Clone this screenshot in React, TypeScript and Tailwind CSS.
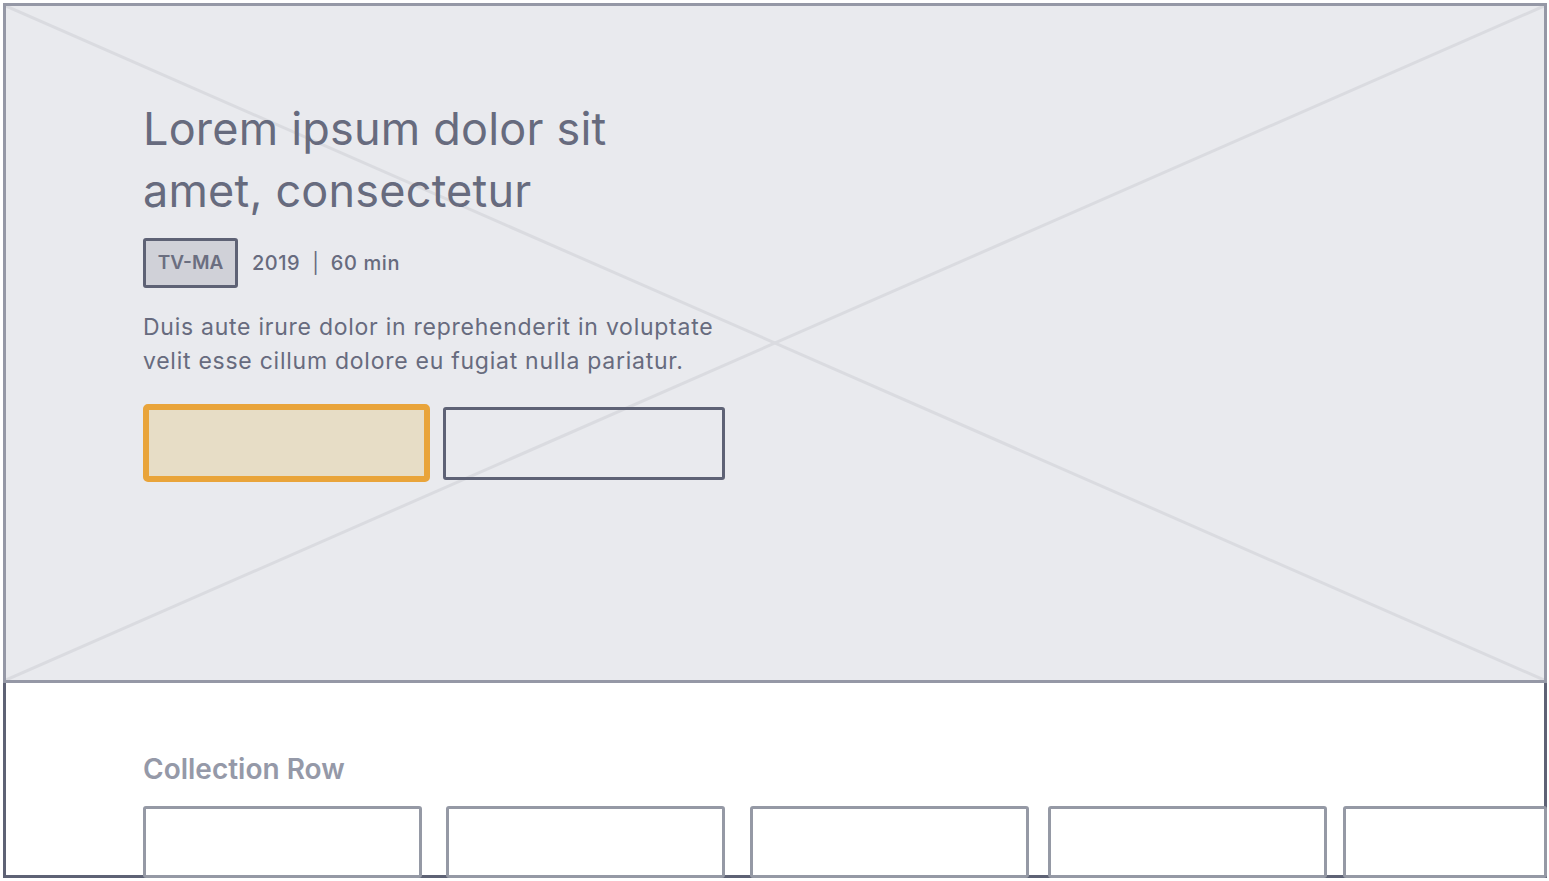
const cards = [
  { w: "w-[279px]", ml: "ml-0" },
  { w: "w-[279px]", ml: "ml-[24px]" },
  { w: "w-[279px]", ml: "ml-[25px]" },
  { w: "w-[279px]", ml: "ml-[19px]" },
  { w: "w-[204px]", ml: "ml-[16px]" },
];

export default function App() {
  return (
    <div className="w-[1549px] h-[881px] bg-white pt-[3px] pl-[3px] font-['Inter',sans-serif] overflow-hidden">
      <div className="w-[1544px] h-[875px] flex flex-col">
        {/* Hero placeholder */}
        <section className="relative h-[680px] shrink-0 border-[3px] border-[#9598a6] bg-[#e9eaee] pl-[137px] pt-[92px]">
          <svg
            className="absolute inset-0 w-full h-full"
            viewBox="0 0 100 100"
            preserveAspectRatio="none"
          >
            <line x1="0" y1="0" x2="100" y2="100" stroke="#dadbe0" strokeWidth="3" vectorEffect="non-scaling-stroke" />
            <line x1="100" y1="0" x2="0" y2="100" stroke="#dadbe0" strokeWidth="3" vectorEffect="non-scaling-stroke" />
          </svg>

          <div className="relative">
            <h1 className="text-[45px] leading-[62px] tracking-[0.2px] text-[#676b7e] font-normal w-[520px]">
              Lorem ipsum dolor sit amet, consectetur
            </h1>

            <div className="flex items-center mt-[16px] text-[#676b7e]">
              <span className="h-[50px] w-[95px] flex items-center justify-center border-[3px] border-[#5e6275] rounded-[3px] bg-[#d0d1d8] text-[19px] font-semibold text-[#6b6e80]">
                TV-MA
              </span>
              <span className="ml-[14px] text-[20px] font-medium tracking-[0.5px]">2019</span>
              <span className="mx-[12px] text-[20px]">|</span>
              <span className="text-[20px] font-medium tracking-[0.6px]">60 min</span>
            </div>

            <p className="mt-[22px] text-[23px] leading-[34px] tracking-[0.74px] text-[#676b7e] w-[590px]">
              Duis aute irure dolor in reprehenderit in voluptate velit esse cillum dolore eu fugiat nulla pariatur.
            </p>

            <div className="flex items-center mt-[26px]">
              <button className="w-[287px] h-[78px] border-[6px] border-[#e9a43a] bg-[#e7ddc6] rounded-[5px]" />
              <button className="ml-[13px] w-[282px] h-[73px] border-[3px] border-[#5e6275] rounded-[3px]" />
            </div>
          </div>
        </section>

        {/* Collection row */}
        <section className="flex-1 min-h-0 border-x-[3px] border-b-[3px] border-[#5e6275] pl-[137px] pt-[69px]">
          <h2 className="text-[28px] leading-[34px] font-semibold text-[#9599a8]">Collection Row</h2>
          <div className="flex mt-[20px] -mr-[3px]">
            {cards.map((c, i) => (
              <div
                key={i}
                className={`${c.w} ${c.ml} h-[72px] shrink-0 border-[3px] border-[#9599a5] rounded-[3px] bg-white`}
              />
            ))}
          </div>
        </section>
      </div>
    </div>
  );
}
